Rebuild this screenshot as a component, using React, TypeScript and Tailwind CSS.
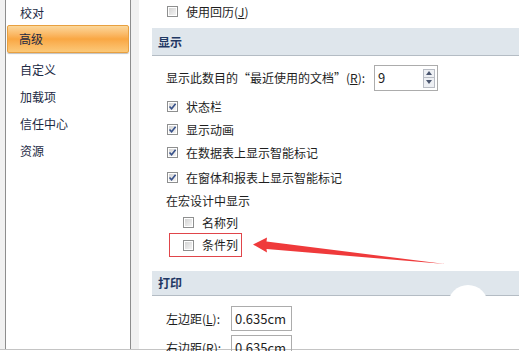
const font = { fontFamily: '"Noto Sans CJK SC", "Noto Sans", sans-serif' };

const navItems = ["校对", "高级", "自定义", "加载项", "信任中心", "资源"];

function CheckBox({ checked = false }: { checked?: boolean }) {
  return (
    <span className="flex h-[11px] w-[11px] shrink-0 items-center justify-center border border-[#8e8f8f] bg-white p-[1px]">
      <span className="relative flex h-full w-full items-center justify-center bg-gradient-to-br from-[#d4d4d4] to-[#f4f4f4]">
        {checked ? (
          <svg width="9" height="9" viewBox="0 0 9 9" className="absolute">
            <path d="M1.5 4.5 L3.6 6.8 L7.6 1.8" fill="none" stroke="#37518a" strokeWidth="1.6" />
          </svg>
        ) : null}
      </span>
    </span>
  );
}

function CheckRow({ label, checked, indent = false }: { label: React.ReactNode; checked?: boolean; indent?: boolean }) {
  return (
    <div className={`flex h-[23px] items-center gap-[8px] ${indent ? "pl-[17px]" : "pl-[1px]"}`}>
      <CheckBox checked={checked} />
      <span>{label}</span>
    </div>
  );
}

function SectionHeader({ title }: { title: string }) {
  return (
    <div className="flex h-[25px] items-center border-b border-[#b4bcc4] bg-[#dfe6ec] pl-[6px] text-[12px] font-bold text-[#1f3864]">
      {title}
    </div>
  );
}

export default function App() {
  return (
    <div className="relative h-[351px] w-[519px] overflow-hidden bg-white text-[12px] text-[#1e1e1e]" style={font}>
      <div className="flex h-[349px]">
        {/* left nav */}
        <div className="flex w-[139px] shrink-0 bg-[#f1f1f1] pl-[5px] pr-[8px]">
          <div className="flex-1 border-x border-[#8d8d8d] bg-white pt-[1px] text-[#1c2a44]">
            {navItems.map((item) =>
              item === "高级" ? (
                <div
                  key={item}
                  className="mx-[1px] mb-[3px] flex h-[28px] items-center rounded-[2px] border border-[#e8a040] bg-gradient-to-b from-[#fbd79a] via-[#f9a742] to-[#fbc878] pl-[11px] shadow-[0_1px_1px_rgba(0,0,0,0.25)]"
                >
                  {item}
                </div>
              ) : (
                <div key={item} className={`flex items-center pl-[14px] ${item === "校对" ? "h-[24px]" : "h-[27px]"}`}>
                  {item}
                </div>
              ),
            )}
          </div>
        </div>

        {/* main options */}
        <div className="flex-1 pl-[13px]">
          <div className="pl-[14px]">
            <CheckRow
              label={
                <>
                  使用回历(<span className="underline">J</span>)
                </>
              }
            />
          </div>
          <div className="mt-[5px] h-[28px]">
            <div className="flex h-[28px] items-center border-b border-[#b4bcc4] bg-[#dfe6ec] pl-[6px] font-bold text-[#1f3864]">显示</div>
          </div>

          <div className="pl-[14px]">
            <div className="mt-[9px] flex h-[26px] items-center">
              <span>
                显示此数目的“最近使用的文档”(<span className="underline">R</span>):
              </span>
              <div className="ml-[9px] flex h-[26px] w-[64px] items-center justify-between border border-[#acacac] pl-[3px] pr-[2px]">
                <span className="text-[13px]">9</span>
                <div className="flex flex-col">
                  <span className="flex h-[9px] w-[12px] items-center justify-center border border-[#b8bcc4] bg-[#eef0f4]">
                    <svg width="6" height="4" viewBox="0 0 6 4">
                      <path d="M0 4 L3 0 L6 4 Z" fill="#4a5670" />
                    </svg>
                  </span>
                  <span className="flex h-[10px] w-[12px] items-center justify-center border border-t-0 border-[#b8bcc4] bg-[#eef0f4]">
                    <svg width="6" height="4" viewBox="0 0 6 4">
                      <path d="M0 0 L6 0 L3 4 Z" fill="#4a5670" />
                    </svg>
                  </span>
                </div>
              </div>
            </div>

            <div className="mt-[4px]">
              <CheckRow label="状态栏" checked />
              <CheckRow label="显示动画" checked />
              <CheckRow label="在数据表上显示智能标记" checked />
              <div className="mt-[2px]">
                <CheckRow label="在窗体和报表上显示智能标记" checked />
              </div>
              <div className="flex h-[23px] items-center">在宏设计中显示</div>
              <div className="flex h-[21px] items-center gap-[8px] pl-[17px]">
                <CheckBox />
                <span>名称列</span>
              </div>
              <div className="ml-[3px] flex h-[24px] w-[73px] items-center gap-[8px] border border-[#e0454a] pl-[13px]">
                <CheckBox />
                <span>条件列</span>
              </div>
            </div>
          </div>

          <div className="mt-[14px] flex h-[25px] items-center border-b border-[#b4bcc4] bg-[#dfe6ec] pl-[6px] font-bold text-[#1f3864]">打印</div>

          <div className="pl-[14px]">
            <div className="mt-[10px] flex h-[25px] items-center">
              <span className="w-[65px]">
                左边距(<span className="underline">L</span>):
              </span>
              <div className="flex h-[25px] w-[61px] items-center border border-[#acacac] pl-[3px] text-[13px]">0.635cm</div>
            </div>
            <div className="mt-[4px] flex h-[25px] items-center">
              <span className="w-[65px]">
                右边距(<span className="underline">R</span>):
              </span>
              <div className="flex h-[25px] w-[61px] items-center border border-[#acacac] pl-[3px] text-[13px]">0.635cm</div>
            </div>
          </div>
        </div>
      </div>
      <div className="h-px bg-[#c4c4c4]" />

      {/* watermark blob over the print header */}
      <div className="absolute left-[448px] top-[285px] h-[40px] w-[40px] rounded-full bg-white" />

      {/* red annotation arrow */}
      <svg className="absolute left-0 top-0" width="519" height="351" viewBox="0 0 519 351">
        <polygon
          points="253,244.5 267,237.5 266.5,241.5 445,264 266.5,249 267,252.5"
          fill="#ef3a3b"
        />
      </svg>
    </div>
  );
}
